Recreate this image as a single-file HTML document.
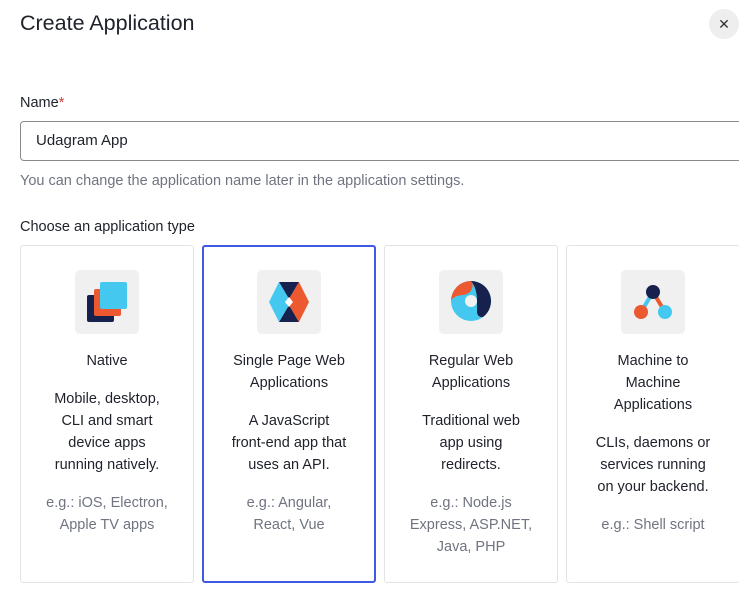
<!DOCTYPE html>
<html><head><meta charset="utf-8"><style>
*{box-sizing:border-box;margin:0;padding:0}
body{width:739px;height:592px;overflow:hidden;background:#fff;font-family:"Liberation Sans",sans-serif;color:#1e212a;position:relative}
.t{position:absolute;left:20px;top:10px;font-size:21.5px;line-height:26px}
.x{position:absolute;left:709px;top:9px;width:30px;height:30px;border-radius:50%;background:#eeeeee;font-size:14px;text-align:center;line-height:30px;color:#333}
.lbl{position:absolute;left:20px;top:95px;font-size:14.5px}
.lbl span{color:#d03c38}
.inp{position:absolute;left:20px;top:121px;width:730px;height:40px;border:1px solid #8a8a8a;border-radius:4px;font-size:15px;line-height:38px;padding-left:15px}
.help{position:absolute;left:20px;top:173px;font-size:14.5px;color:#6f7480}
.ch{position:absolute;left:20px;top:219px;font-size:14.5px}
.card{position:absolute;top:245px;width:174px;height:338px;border:1px solid #e3e3e3;border-radius:3px;text-align:center;padding:0;font-size:14.5px;line-height:22px;white-space:nowrap}
.card.sel{border:2px solid #3f59e4}
.ic{width:64px;height:64px;background:#f0f0f0;border-radius:5px;margin:24px auto 16px}
.sel .ic{margin-top:23px}
.d{margin-top:16px}
.e{margin-top:16px;color:#6f7480}
</style></head><body>
<div class="t">Create Application</div>
<div class="x">✕</div>
<div class="lbl">Name<span>*</span></div>
<div class="inp">Udagram App</div>
<div class="help">You can change the application name later in the application settings.</div>
<div class="ch">Choose an application type</div>

<div class="card" style="left:20px">
<div class="ic"><svg width="64" height="64"><rect x="12" y="25" width="27" height="27" rx="2" fill="#16214d"/><rect x="19" y="19" width="27" height="27" rx="2" fill="#ec5830"/><rect x="25" y="12" width="27" height="27" rx="2" fill="#44c8f0"/></svg></div>
<div>Native</div>
<div class="d">Mobile, desktop,<br>CLI and smart<br>device apps<br>running natively.</div>
<div class="e">e.g.: iOS, Electron,<br>Apple TV apps</div>
</div>

<div class="card sel" style="left:202px">
<div class="ic"><svg width="64" height="64"><polygon points="22,12 42,12 32,29" fill="#16214d"/><polygon points="22,52 42,52 32,35" fill="#16214d"/><polygon points="22,12 32,29 28,32 32,35 22,52 12,32" fill="#44c8f0"/><polygon points="42,12 52,32 42,52 32,35 36,32 32,29" fill="#ec5830"/><polygon points="32,27 36,32 32,37 28,32" fill="#fff"/></svg></div>
<div>Single Page Web<br>Applications</div>
<div class="d">A JavaScript<br>front-end app that<br>uses an API.</div>
<div class="e">e.g.: Angular,<br>React, Vue</div>
</div>

<div class="card" style="left:384px">
<div class="ic"><svg width="64" height="64"><circle cx="32" cy="31" r="20" fill="#44c8f0"/><path d="M12 31 A20 20 0 0 1 32 11 C35 14 34 21 28 24 C21 26 15 25 12 31Z" fill="#ec5830"/><path d="M32 11 A20 20 0 0 1 44 47 A5 5 0 0 1 38 42 L38 31 C38 22 36 16 32 11Z" fill="#16214d"/><circle cx="32" cy="31" r="6" fill="#f0f0f0"/></svg></div>
<div>Regular Web<br>Applications</div>
<div class="d">Traditional web<br>app using<br>redirects.</div>
<div class="e">e.g.: Node.js<br>Express, ASP.NET,<br>Java, PHP</div>
</div>

<div class="card" style="left:566px">
<div class="ic"><svg width="64" height="64"><line x1="32" y1="22" x2="20" y2="42" stroke="#44c8f0" stroke-width="4"/><line x1="32" y1="22" x2="44" y2="42" stroke="#ec5830" stroke-width="4"/><circle cx="32" cy="22" r="7" fill="#16214d"/><circle cx="20" cy="42" r="7" fill="#ec5830"/><circle cx="44" cy="42" r="7" fill="#44c8f0"/></svg></div>
<div>Machine to<br>Machine<br>Applications</div>
<div class="d">CLIs, daemons or<br>services running<br>on your backend.</div>
<div class="e">e.g.: Shell script</div>
</div>
</body></html>
